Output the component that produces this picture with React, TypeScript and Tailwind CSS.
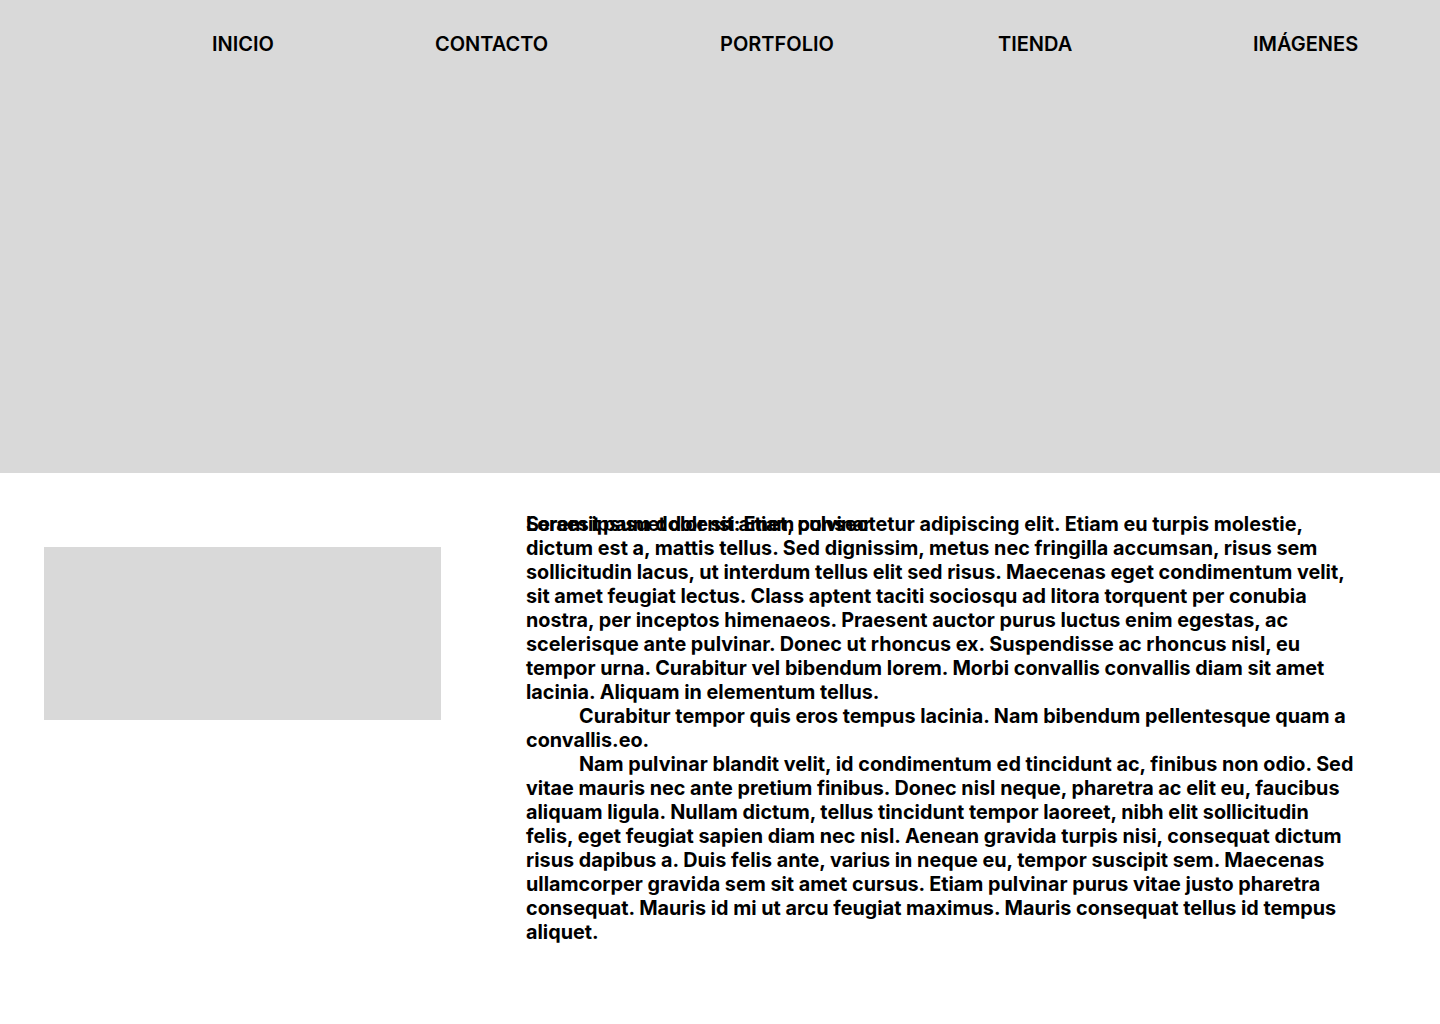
import React from 'react';

const navItems = [
  { label: 'INICIO', cls: 'w-[223px]' },
  { label: 'CONTACTO', cls: 'w-[285px]' },
  { label: 'PORTFOLIO', cls: 'w-[278px]' },
  { label: 'TIENDA', cls: 'w-[255px]' },
  { label: 'IMÁGENES', cls: '' },
];

const App: React.FC = () => {
  return (
    <div className="min-h-[1024px] bg-white text-black font-['Inter',sans-serif]">
      {/* hero */}
      <header className="h-[473px] bg-[#d9d9d9]">
        <nav className="flex items-center pl-[212px] pt-[31px]">
          {navItems.map((item) => (
            <a key={item.label} className={`${item.cls} shrink-0 text-[20px] leading-[26px] font-semibold tracking-normal`}>
              {item.label}
            </a>
          ))}
        </nav>
      </header>

      <section className="flex pt-[39px] pb-16">
        <div className="ml-[44px] mt-[35px] w-[397px] h-[173px] bg-[#d9d9d9] shrink-0" />

        <div className="relative ml-[85px] w-[832px] text-[19.8px] leading-[24px] font-bold">
          <h2 className="absolute left-0 top-0 text-[19.8px] leading-[24px] font-bold tracking-[-0.04em]">
            Seraesit pasuet dolensi: Etiam pulvinar
          </h2>
          <p>
            Lorem ipsum dolor sit amet, consectetur adipiscing elit. Etiam eu turpis molestie, dictum est a, mattis tellus. Sed dignissim, metus nec fringilla accumsan, risus sem sollicitudin lacus, ut interdum tellus elit sed risus. Maecenas eget condimentum velit, sit amet feugiat lectus. Class aptent taciti sociosqu ad litora torquent per conubia nostra, per inceptos himenaeos. Praesent auctor purus luctus enim egestas, ac scelerisque ante pulvinar. Donec ut rhoncus ex. Suspendisse ac rhoncus nisl, eu tempor urna. Curabitur vel bibendum lorem. Morbi convallis convallis diam sit amet lacinia. Aliquam in elementum tellus.
          </p>
          <p className="indent-[53px]">
            Curabitur tempor quis eros tempus lacinia. Nam bibendum pellentesque quam a convallis.eo.
          </p>
          <p className="indent-[53px]">
            Nam pulvinar blandit velit, id condimentum ed tincidunt ac, finibus non odio. Sed vitae mauris nec ante pretium finibus. Donec nisl neque, pharetra ac elit eu, faucibus aliquam ligula. Nullam dictum, tellus tincidunt tempor laoreet, nibh elit sollicitudin felis, eget feugiat sapien diam nec nisl. Aenean gravida turpis nisi, consequat dictum risus dapibus a. Duis felis ante, varius in neque eu, tempor suscipit sem. Maecenas ullamcorper gravida sem sit amet cursus. Etiam pulvinar purus vitae justo pharetra consequat. Mauris id mi ut arcu feugiat maximus. Mauris consequat tellus id tempus aliquet.
          </p>
        </div>
      </section>
    </div>
  );
};

export default App;
